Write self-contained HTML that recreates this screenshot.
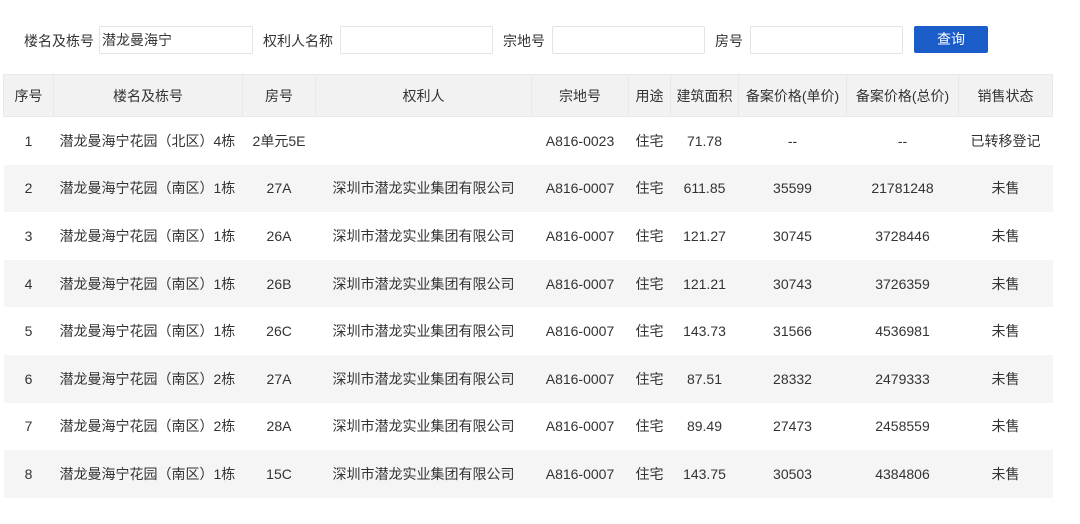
<!DOCTYPE html>
<html><head><meta charset="utf-8"><style>
body{margin:0;background:#fff;font-family:"Liberation Sans","Noto Sans CJK SC",sans-serif;font-size:14px;color:#333;width:1080px;height:524px;overflow:hidden;position:relative}
.l{position:absolute;top:33px;line-height:16px}
.i{position:absolute;top:26px;height:28px;border:1px solid #e4e4e4;border-radius:2px;box-sizing:border-box;line-height:26px;padding-left:2px}
.btn{position:absolute;left:914px;top:26px;width:74px;height:27px;background:#1a5cc8;color:#fff;text-align:center;line-height:27px;border-radius:2px}
table{position:absolute;left:3px;top:74px;border-collapse:collapse;table-layout:fixed;width:1049px}
th{background:#f2f2f2;font-weight:normal;height:41px;border:1px solid #e8e8e8;padding:0;text-align:center}
td{height:47.6px;padding:0;text-align:center;border:none;white-space:nowrap}
tbody tr:nth-child(even) td{background:#f5f5f5}
td.n{text-align:left;padding-left:6px}
</style></head><body>
<div class="l" style="left:24px">楼名及栋号</div>
<div class="i" style="left:99px;width:154px">潜龙曼海宁</div>
<div class="l" style="left:263px">权利人名称</div>
<div class="i" style="left:340px;width:153px"></div>
<div class="l" style="left:503px">宗地号</div>
<div class="i" style="left:552px;width:153px"></div>
<div class="l" style="left:715px">房号</div>
<div class="i" style="left:750px;width:153px"></div>
<div class="btn">查询</div>
<table>
<colgroup><col style="width:50px"><col style="width:189px"><col style="width:73px"><col style="width:216px"><col style="width:97px"><col style="width:42px"><col style="width:68px"><col style="width:108px"><col style="width:112px"><col style="width:94px"></colgroup>
<thead><tr><th>序号</th><th>楼名及栋号</th><th>房号</th><th>权利人</th><th>宗地号</th><th>用途</th><th>建筑面积</th><th>备案价格(单价)</th><th>备案价格(总价)</th><th>销售状态</th></tr></thead>
<tbody>
<tr><td>1</td><td class="n">潜龙曼海宁花园（北区）4栋</td><td>2单元5E</td><td></td><td>A816-0023</td><td>住宅</td><td>71.78</td><td>--</td><td>--</td><td>已转移登记</td></tr>
<tr><td>2</td><td class="n">潜龙曼海宁花园（南区）1栋</td><td>27A</td><td>深圳市潜龙实业集团有限公司</td><td>A816-0007</td><td>住宅</td><td>611.85</td><td>35599</td><td>21781248</td><td>未售</td></tr>
<tr><td>3</td><td class="n">潜龙曼海宁花园（南区）1栋</td><td>26A</td><td>深圳市潜龙实业集团有限公司</td><td>A816-0007</td><td>住宅</td><td>121.27</td><td>30745</td><td>3728446</td><td>未售</td></tr>
<tr><td>4</td><td class="n">潜龙曼海宁花园（南区）1栋</td><td>26B</td><td>深圳市潜龙实业集团有限公司</td><td>A816-0007</td><td>住宅</td><td>121.21</td><td>30743</td><td>3726359</td><td>未售</td></tr>
<tr><td>5</td><td class="n">潜龙曼海宁花园（南区）1栋</td><td>26C</td><td>深圳市潜龙实业集团有限公司</td><td>A816-0007</td><td>住宅</td><td>143.73</td><td>31566</td><td>4536981</td><td>未售</td></tr>
<tr><td>6</td><td class="n">潜龙曼海宁花园（南区）2栋</td><td>27A</td><td>深圳市潜龙实业集团有限公司</td><td>A816-0007</td><td>住宅</td><td>87.51</td><td>28332</td><td>2479333</td><td>未售</td></tr>
<tr><td>7</td><td class="n">潜龙曼海宁花园（南区）2栋</td><td>28A</td><td>深圳市潜龙实业集团有限公司</td><td>A816-0007</td><td>住宅</td><td>89.49</td><td>27473</td><td>2458559</td><td>未售</td></tr>
<tr><td>8</td><td class="n">潜龙曼海宁花园（南区）1栋</td><td>15C</td><td>深圳市潜龙实业集团有限公司</td><td>A816-0007</td><td>住宅</td><td>143.75</td><td>30503</td><td>4384806</td><td>未售</td></tr>
</tbody>
</table>
</body></html>
